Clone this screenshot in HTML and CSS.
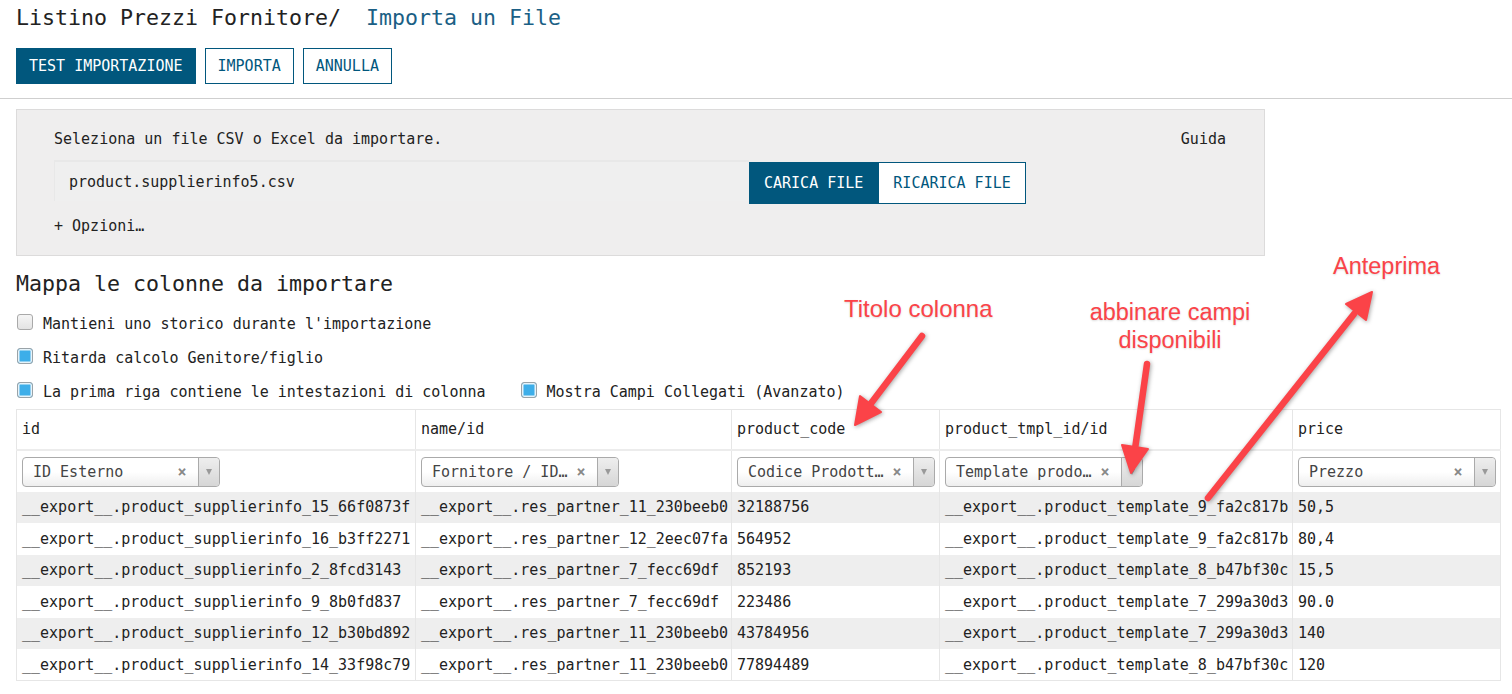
FILE: index.html
```html
<!DOCTYPE html>
<html lang="it">
<head>
<meta charset="utf-8">
<title>Importa un File</title>
<link rel="stylesheet" href="styles.css">
</head>
<body>
<header class="topbar">
  <h1 class="crumbs"><span class="crumb">Listino Prezzi Fornitore</span><span class="sep">/</span><span class="crumb-active">Importa un File</span></h1>
  <div class="actions">
    <button class="btn btn-primary">TEST IMPORTAZIONE</button>
    <button class="btn">IMPORTA</button>
    <button class="btn">ANNULLA</button>
  </div>
</header>
<main class="content">
  <section class="upload">
    <div class="upload-head"><span>Seleziona un file CSV o Excel da importare.</span><span class="help">Guida</span></div>
    <div class="upload-row">
      <div class="file-field">product.supplierinfo5.csv</div>
      <button class="btn btn-primary btn-tall">CARICA FILE</button>
      <button class="btn btn-tall">RICARICA FILE</button>
    </div>
    <div class="options">+ Opzioni…</div>
  </section>

  <h2 class="map-title">Mappa le colonne da importare</h2>
  <div class="opt-row"><label class="check"><span class="box"></span>Mantieni uno storico durante l'importazione</label></div>
  <div class="opt-row"><label class="check"><span class="box on"></span>Ritarda calcolo Genitore/figlio</label></div>
  <div class="opt-row last"><label class="check"><span class="box on"></span>La prima riga contiene le intestazioni di colonna</label><label class="check"><span class="box on"></span>Mostra Campi Collegati (Avanzato)</label></div>

  <table class="preview">
    <colgroup><col class="c1"><col class="c2"><col class="c3"><col class="c4"><col class="c5"></colgroup>
    <thead>
      <tr class="head"><th>id</th><th>name/id</th><th>product_code</th><th>product_tmpl_id/id</th><th>price</th></tr>
      <tr class="sels">
        <td><div class="s2"><span class="s2-label">ID Esterno</span><span class="s2-clear">×</span><span class="s2-arrow"><span class="tri"></span></span></div></td>
        <td><div class="s2"><span class="s2-label">Fornitore / ID…</span><span class="s2-clear">×</span><span class="s2-arrow"><span class="tri"></span></span></div></td>
        <td><div class="s2"><span class="s2-label">Codice Prodott…</span><span class="s2-clear">×</span><span class="s2-arrow"><span class="tri"></span></span></div></td>
        <td><div class="s2"><span class="s2-label">Template prodo…</span><span class="s2-clear">×</span><span class="s2-arrow"><span class="tri"></span></span></div></td>
        <td><div class="s2 wide"><span class="s2-label">Prezzo</span><span class="s2-clear">×</span><span class="s2-arrow"><span class="tri"></span></span></div></td>
      </tr>
    </thead>
    <tbody>
      <tr><td>__export__.product_supplierinfo_15_66f0873f</td><td>__export__.res_partner_11_230beeb0</td><td>32188756</td><td>__export__.product_template_9_fa2c817b</td><td>50,5</td></tr>
      <tr><td>__export__.product_supplierinfo_16_b3ff2271</td><td>__export__.res_partner_12_2eec07fa</td><td>564952</td><td>__export__.product_template_9_fa2c817b</td><td>80,4</td></tr>
      <tr><td>__export__.product_supplierinfo_2_8fcd3143</td><td>__export__.res_partner_7_fecc69df</td><td>852193</td><td>__export__.product_template_8_b47bf30c</td><td>15,5</td></tr>
      <tr><td>__export__.product_supplierinfo_9_8b0fd837</td><td>__export__.res_partner_7_fecc69df</td><td>223486</td><td>__export__.product_template_7_299a30d3</td><td>90.0</td></tr>
      <tr><td>__export__.product_supplierinfo_12_b30bd892</td><td>__export__.res_partner_11_230beeb0</td><td>43784956</td><td>__export__.product_template_7_299a30d3</td><td>140</td></tr>
      <tr><td>__export__.product_supplierinfo_14_33f98c79</td><td>__export__.res_partner_11_230beeb0</td><td>77894489</td><td>__export__.product_template_8_b47bf30c</td><td>120</td></tr>
    </tbody>
  </table>
</main>

<div class="annot">
  <svg class="arrows" width="1512" height="694" viewBox="0 0 1512 694">
    <g class="arrow">
      <line x1="922" y1="336" x2="869" y2="406"/>
      <polygon points="855,425 881,412 860,396"/>
    </g>
    <g class="arrow">
      <line x1="1147" y1="364" x2="1135" y2="449"/>
      <polygon points="1131,473 1148,449 1122,445"/>
    </g>
    <g class="arrow">
      <line x1="1208" y1="498" x2="1354" y2="314"/>
      <polygon points="1372,292 1366,320 1346,304"/>
    </g>
  </svg>
  <div class="note n1">Titolo colonna</div>
  <div class="note n2">abbinare campi<br>disponibili</div>
  <div class="note n3">Anteprima</div>
</div>
</body>
</html>
```

FILE: styles.css
```css
* { box-sizing: border-box; }
html, body { margin: 0; padding: 0; }
body {
  font-family: "DejaVu Sans Mono", "Liberation Mono", monospace;
  font-size: 15px;
  color: #222;
  background: #fff;
  width: 1512px;
  height: 694px;
  overflow: hidden;
  position: relative;
}

/* header */
.topbar {
  padding: 5px 16px 14px;
  border-bottom: 1px solid #cfcfcf;
}
.crumbs {
  margin: 0;
  font-size: 21.6px;
  font-weight: normal;
  line-height: 26px;
  display: flex;
}
.crumb { color: #222; }
.sep { color: #222; margin-right: 25px; }
.crumb-active { color: #1b5f85; }
.actions { display: flex; gap: 9px; margin-top: 17px; }

.btn {
  font-family: inherit;
  font-size: 15px;
  height: 36px;
  padding: 0 12px;
  border: 1px solid #01577d;
  background: #fff;
  color: #01577d;
  border-radius: 0;
  cursor: pointer;
}
.btn-primary { background: #01577d; color: #fff; }

/* content */
.content { padding: 0 16px; }

.upload {
  margin-top: 10px;
  width: 1249px;
  background: #efeeee;
  border: 1px solid #dcdbdb;
  padding: 19px 38px 19px 37px;
}
.upload-head {
  display: flex;
  justify-content: space-between;
  line-height: 20px;
}
.upload-row {
  display: flex;
  align-items: flex-start;
  margin-top: 11px;
}
.file-field {
  width: 695px;
  height: 41px;
  line-height: 40px;
  padding-left: 14px;
  background: #efefef;
  border-top: 2px solid #e8e8e8;
  border-left: 1px solid #e8e8e8;
}
.btn-tall { height: 42px; margin-top: 2px; padding: 0 14px; }
.options { margin-top: 12px; line-height: 20px; }

.map-title {
  margin: 15px 0 0;
  font-size: 21.6px;
  font-weight: normal;
  line-height: 26px;
}
.opt-row {
  display: flex;
  align-items: center;
  gap: 34px;
  height: 34px;
}
.map-title + .opt-row { margin-top: 10px; }
.opt-row.last { height: 34px; }
.check { display: flex; align-items: center; gap: 10px; }
.box {
  width: 16px;
  height: 16px;
  margin-left: 1px;
  margin-bottom: 4px;
  border: 1px solid #a9a9a9;
  border-radius: 3px;
  background: linear-gradient(#f5f5f5, #e3e3e3);
}
.box.on {
  background: #3daee9;
  border-color: #9aa3a8;
  box-shadow: inset 0 0 0 1.5px #e6f3fa;
}

/* table */
.preview {
  width: 1484px;
  table-layout: fixed;
  border-collapse: collapse;
  border: 1px solid #e6e6e6;
}
.c1 { width: 399px; }
.c2 { width: 316px; }
.c3 { width: 208px; }
.c4 { width: 353px; }
.c5 { width: 208px; }

.preview th, .preview td {
  padding: 0 5px;
  text-align: left;
  font-weight: normal;
  white-space: nowrap;
  overflow: hidden;
  border-left: 1px solid #e6e6e6;
  vertical-align: middle;
}
.head th { height: 40px; border-bottom: 2px solid #ececec; }
.sels td { height: 42px; padding-top: 1px; }
.preview tbody td { height: 31.5px; }
.preview tbody tr:nth-child(odd) td { background: #eeeeee; }

/* select2-like */
.s2 {
  display: flex;
  align-items: center;
  width: 198px;
  height: 30px;
  border: 1px solid #aaa;
  border-radius: 4px;
  background: linear-gradient(#ffffff 50%, #eeeeee 100%);
  color: #444;
}
.s2-label {
  flex: 1;
  padding-left: 10px;
  white-space: nowrap;
  overflow: hidden;
}
.s2-clear {
  width: 20px;
  margin-right: 6px;
  text-align: center;
  color: #888;
  font-weight: bold;
  font-size: 15px;
}
.s2-arrow {
  width: 21px;
  align-self: stretch;
  border-left: 1px solid #aaa;
  border-radius: 0 4px 4px 0;
  background: linear-gradient(#eeeeee, #d6d6d6);
  display: flex;
  align-items: center;
  justify-content: center;
}
.tri {
  width: 0;
  height: 0;
  border-left: 3px solid transparent;
  border-right: 3px solid transparent;
  border-top: 6px solid #999;
}

/* annotations */
.annot {
  position: absolute;
  left: 0;
  top: 0;
  width: 1512px;
  height: 694px;
  pointer-events: none;
}
.arrows {
  position: absolute;
  left: 0;
  top: 0;
  filter: drop-shadow(1px 1px 2px rgba(0, 0, 0, 0.35));
}
.arrow line { stroke: #fb4348; stroke-width: 6.5; stroke-linecap: round; }
.arrow polygon { fill: #fb4348; stroke: #fb4348; stroke-width: 2; stroke-linejoin: round; }
.note {
  position: absolute;
  font-family: "Liberation Sans", Arial, sans-serif;
  font-size: 23.5px;
  line-height: 28px;
  color: #fb4348;
  text-shadow: 0 1px 2px rgba(0, 0, 0, 0.15);
  white-space: nowrap;
}
.n1 { left: 844px; top: 295px; font-size: 24px; }
.n2 { left: 1070px; width: 200px; top: 298px; text-align: center; }
.n3 { left: 1333px; top: 252px; }
```
